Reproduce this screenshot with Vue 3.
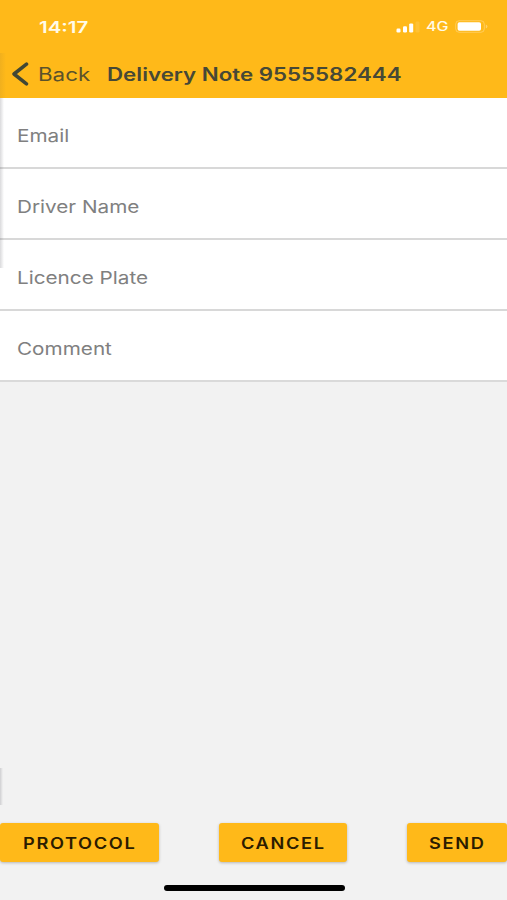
<script setup>
const fields = [
  { id: 'email', label: 'Email' },
  { id: 'driver', label: 'Driver Name' },
  { id: 'plate', label: 'Licence Plate' },
  { id: 'comment', label: 'Comment' },
]
const actions = [
  { id: 'protocol', label: 'PROTOCOL' },
  { id: 'cancel', label: 'CANCEL' },
  { id: 'send', label: 'SEND' },
]
</script>

<template>
  <div class="screen">
    <header class="top">
      <div class="status">
        <span class="time wide">14:17</span>
        <div class="indicators">
          <svg class="signal" width="24" height="12" viewBox="0 0 24 12">
            <rect x="0.5" y="7.5" width="4" height="4" rx="1.2" />
            <rect x="7" y="5.3" width="4" height="6.2" rx="1.2" />
            <rect x="13.2" y="2.4" width="4" height="9.1" rx="1.2" />
            <rect x="19.5" y="0.5" width="4" height="11" rx="1.2" opacity="0.12" />
          </svg>
          <span class="network wide">4G</span>
          <svg class="battery" width="33" height="13" viewBox="0 0 33 13">
            <rect x="0.7" y="0.7" width="28.6" height="11.6" rx="3.5" fill="none" stroke="#fff" stroke-opacity="0.28" />
            <rect x="2.6" y="2.2" width="23.4" height="8.6" rx="1.8" />
            <path d="M30.8 4.4q1.6.5 1.6 2.1t-1.6 2.1z" opacity="0.35" />
          </svg>
        </div>
      </div>
      <nav class="nav">
        <svg class="chevron" width="18" height="24" viewBox="0 0 18 24">
          <path d="M15.5 2.2 3 12l12.5 9.8" />
        </svg>
        <span class="back wide">Back</span>
        <h1 class="title wide">Delivery Note 9555582444</h1>
      </nav>
      <i class="edge edge-nav"></i>
    </header>

    <main class="form">
      <div v-for="field in fields" :key="field.id" class="field">
        <span class="label wide">{{ field.label }}</span>
      </div>
      <i class="edge edge-form"></i>
    </main>

    <i class="edge edge-low"></i>

    <footer class="footer">
      <div class="actions">
        <button v-for="action in actions" :key="action.id" class="action" :class="action.id">
          <span class="wide caption">{{ action.label }}</span>
        </button>
      </div>
      <div class="home"></div>
    </footer>
  </div>
</template>

<style>
body {
  margin: 0;
}
</style>

<style scoped>
.screen {
  position: relative;
  display: flex;
  flex-direction: column;
  width: 507px;
  height: 900px;
  overflow: hidden;
  background: #f2f2f2;
  font-family: Inter, "Liberation Sans", sans-serif;
}

.wide {
  display: block;
  white-space: nowrap;
  transform-origin: left center;
}

.top {
  position: relative;
  height: 98px;
  background: #ffb919;
}

.status {
  display: flex;
  align-items: center;
  justify-content: space-between;
  height: 50px;
  padding: 3px 19px 0 39px;
  box-sizing: border-box;
  color: #fffbe9;
}

.time {
  font-size: 16px;
  font-weight: 600;
  transform: scaleX(1.28);
}

.indicators {
  display: flex;
  align-items: center;
}

.signal,
.battery {
  fill: #fff;
}

.network {
  width: 22px;
  margin: 0 7px 0 6px;
  font-size: 12.5px;
  font-weight: 500;
  transform: scaleX(1.28);
}

.nav {
  display: flex;
  align-items: center;
  height: 48px;
}

.chevron {
  margin-left: 11px;
  fill: none;
  stroke: #414735;
  stroke-width: 3.5;
  stroke-linecap: round;
  stroke-linejoin: round;
}

.back {
  width: 69px;
  margin-left: 8.5px;
  color: #5b522b;
  font-size: 18px;
  transform: scaleX(1.24);
}

.title {
  margin: 0;
  color: #464836;
  font-size: 18px;
  font-weight: 600;
  transform: scaleX(1.239);
}

.form {
  position: relative;
}

.field {
  display: flex;
  align-items: center;
  height: 71px;
  padding: 6px 17px 0;
  box-sizing: border-box;
  border-bottom: 2px solid #d8d8d8;
  background: #fff;
}

.field:last-of-type {
  border-bottom-color: #dadada;
}

.label {
  color: #808080;
  font-size: 17.5px;
  transform: scaleX(1.183);
}

.edge {
  position: absolute;
  left: 0;
  width: 6px;
  background: linear-gradient(to right, rgba(70, 70, 80, 0.2), transparent);
}

.edge-nav {
  top: 53px;
  height: 45px;
  opacity: 0.4;
}

.edge-form {
  top: 0;
  width: 4px;
  height: 170px;
}

.edge-low {
  top: 768px;
  width: 3px;
  height: 37px;
}

.footer {
  margin-top: auto;
}

.actions {
  display: flex;
  justify-content: space-between;
}

.action {
  display: flex;
  align-items: center;
  height: 39px;
  padding: 1px 0 0 22.5px;
  border: 0;
  border-radius: 3px;
  background: #ffb919;
  box-shadow: 0 1px 3px rgba(0, 0, 0, 0.25);
  color: #2b1c00;
  font-family: inherit;
}

.action.protocol {
  width: 159px;
}

.action.cancel {
  width: 128px;
  padding-left: 21.5px;
}

.action.send {
  width: 100px;
  padding-left: 22px;
}

.caption {
  font-size: 15.5px;
  font-weight: 600;
  letter-spacing: 1.4px;
  transform: scaleX(1.175);
}

.home {
  width: 181px;
  height: 6px;
  margin: 23px auto 9px 164px;
  border-radius: 3px;
  background: #000;
}
</style>
